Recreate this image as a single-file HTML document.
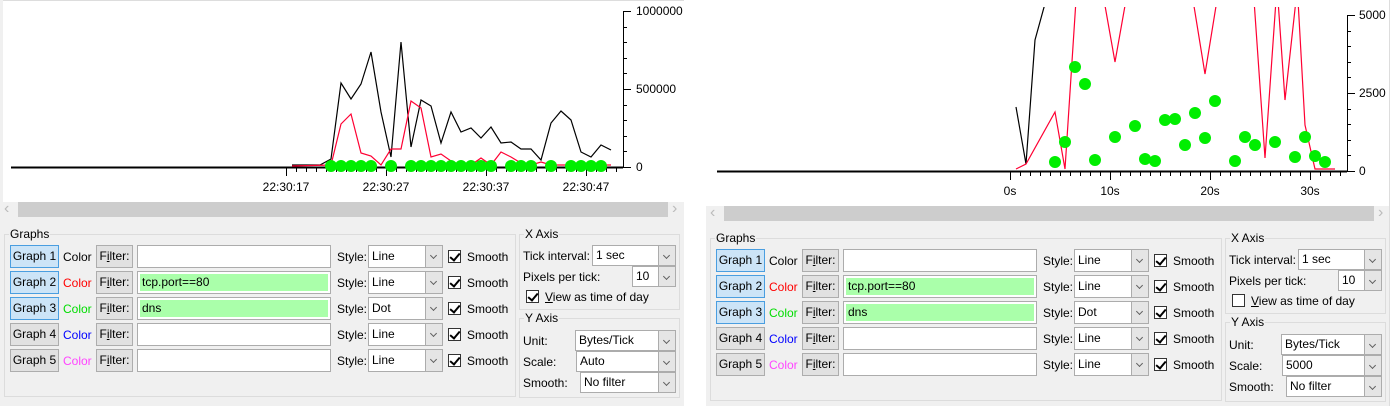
<!DOCTYPE html>
<html><head><meta charset="utf-8">
<style>
*{box-sizing:border-box;margin:0;padding:0}
body{width:1392px;height:406px;background:#fff;position:relative;overflow:hidden;font-family:"Liberation Sans",sans-serif;font-size:12px;color:#000}
.a{position:absolute}
.pane{position:absolute;background:#f0f0f0}
.grp{position:absolute;border:1px solid #dcdcdc;}
.grp>.lg{position:absolute;top:-8px;left:4px;background:#f0f0f0;padding:0 1px;line-height:14px}
.btn{position:absolute;height:23px;border:1px solid #adadad;background:#e1e1e1;line-height:21px;text-align:center}
.btn.sel{background:#cce4f7;border-color:#4a9ee0}
.inp{position:absolute;height:23px;border:1px solid #acacac;background:#fff;line-height:21px;padding-left:4px}
.inp.g{background:#aaffaa;border:3px solid #fff;outline:1px solid #acacac;outline-offset:-1px;line-height:17px;padding-left:2px}
.cb{position:absolute;height:21px;border:1px solid #acacac;background:#fff;line-height:19px;padding-left:3px}
.cb.tall{line-height:21px}
.cb i{position:absolute;right:0;top:0;bottom:0;width:17px;background:#e5e5e5;border-left:1px solid #acacac}
.cb i:after{content:"";position:absolute;left:5px;top:35%;width:4px;height:4px;border-right:1.5px solid #606060;border-bottom:1.5px solid #606060;transform:rotate(45deg)}
.chk{position:absolute;width:13px;height:13px;border:1px solid #333;background:#fff}
.chk.on:after{content:"";position:absolute;left:3px;top:0px;width:4px;height:8px;border-right:2px solid #000;border-bottom:2px solid #000;transform:rotate(40deg)}
.t{position:absolute;line-height:14px;white-space:nowrap}
</style></head><body>
<svg class="a" style="left:0;top:0" width="1392" height="202">
<rect x="0" y="0" width="684" height="1" fill="#ddd"/>
<rect x="0" y="0" width="3" height="202" fill="#f0f0f0"/>
<g id="L"></g><g id="R"></g>
</svg>
<div id="root"></div>
<script>
var ns="http://www.w3.org/2000/svg";
function el(p,t,a,txt){var e=document.createElementNS(ns,t);for(var k in a)e.setAttribute(k,a[k]);if(txt)e.textContent=txt;p.appendChild(e);return e;}
function chart(g,o){
 el(g,"line",{x1:o.x0,y1:o.by+0.5,x2:o.ax,y2:o.by+0.5,stroke:"#000","stroke-width":2});
 el(g,"line",{x1:o.ax+0.5,y1:o.top,x2:o.ax+0.5,y2:o.by+1,stroke:"#000","stroke-width":1});
 for(var i=0;i<=10;i++){var y=o.top+(o.by-o.top)*i/10;el(g,"line",{x1:o.ax,y1:Math.round(y)+0.5,x2:o.ax+(i%5==0?8:4),y2:Math.round(y)+0.5,stroke:"#000"});}
 o.yl.forEach(function(l,i){el(g,"text",{x:o.ax+(o.ylx||13),y:o.top+(o.by-o.top)*i/2+4,"font-size":12,"font-family":"Liberation Sans",fill:"#000"},l);});
 for(var x=o.t0;x<=o.t1;x+=10){var maj=((x-o.t0)%100==0);el(g,"line",{x1:x+0.5,y1:o.by,x2:x+0.5,y2:o.by+(maj?9:5),stroke:"#000"});}
 o.xl.forEach(function(l,i){el(g,"text",{x:o.t0+i*100,y:o.by+24,"text-anchor":"middle","font-size":12,"font-family":"Liberation Sans"},l);});
 var cp=el(g,"clipPath",{id:o.id});el(cp,"rect",{x:0,y:o.clip,width:1392,height:200});
 var gg=el(g,"g",{"clip-path":"url(#"+o.id+")"});
 el(gg,"polyline",{points:o.blk,fill:"none",stroke:"#000","stroke-width":1.2});
 el(gg,"polyline",{points:o.red,fill:"none",stroke:"#ff0033","stroke-width":1.2});
 o.dots.forEach(function(d){el(gg,"circle",{cx:d[0],cy:d[1],r:6,fill:"#00ee00"});});
}
var ld=[331,341,351,361,371,391,411,421,431,441,451,461,471,481,491,511,521,531,551,571,581,591,601].map(function(x){return[x,166]});
chart(document.getElementById("L"),{id:"c1",x0:11,ax:623,top:11,by:167,yl:["1000000","500000","0"],t0:286,t1:616,xl:["22:30:17","22:30:27","22:30:37","22:30:47"],clip:0,
blk:"292,165 320,165 331,159 341,83 351,99 361,84 371,52 381,112 391,157 401,42 411,147 421,100 431,106 441,143 451,112 461,132 471,128 481,138 491,127 501,143 511,142 521,149 531,149 541,160 551,123 561,111 571,120 581,152 591,157 601,145 611,150",
red:"292,166 331,165 341,124 351,114 361,153 371,156 381,165 391,149 401,149 411,101 421,108 431,157 441,154 451,161 461,165 471,165 481,158 491,165 501,152 511,157 521,163 531,165 541,162 551,165 611,165",dots:ld});
var rd=[[1055,162],[1065,142],[1075,67],[1085,84],[1095,160],[1115,137],[1135,126],[1145,159],[1155,161],[1165,120],[1175,119],[1185,145],[1195,113],[1205,138],[1215,101],[1235,161],[1245,137],[1255,145],[1275,142],[1295,157],[1305,137],[1315,156],[1325,162]];
chart(document.getElementById("R"),{id:"c2",x0:717,ax:1347,top:15,by:171,ylx:12,yl:["5000","2500","0"],t0:1010,t1:1340,xl:["0s","10s","20s","30s"],clip:7,
blk:"1016,107 1026,164 1035,40 1046,0",
red:"1016,169 1026,164 1055,112 1065,169 1076,0 1104,0 1115,62 1126,0 1193,0 1205,74 1217,0 1254,0 1265,158 1276,0 1278,0 1285,100 1296,0 1298,0 1305,125 1315,169 1335,169",dots:rd});
var root=document.getElementById("root");
function d(cls,x,y,w,h,html,st){var e=document.createElement("div");e.className=cls;e.style.left=x+"px";e.style.top=y+"px";if(w)e.style.width=w+"px";if(h)e.style.height=h+"px";if(html)e.innerHTML=html;if(st)e.style.cssText+=st;root.appendChild(e);return e;}
function pane(X,Y,W,ox,scale,tod,right){
 d("pane",X,Y+202,W,406-Y-202);
 d("a",X+18,Y+202,W-34,15,"","background:#cdcdcd");
 d("t",X+4,Y+203,10,12,"&#8249;","color:#bbb;font-size:16px;line-height:12px");
 d("t",X+W-12,Y+203,10,12,"&#8250;","color:#bbb;font-size:16px;line-height:12px");
 var g=d("grp",X+4,Y+234,512,163,'<span class="lg">Graphs</span>');
 var cols=["#000","#ff0000","#00dd00","#0000ff","#ff44ff"];
 var flt=["","tcp.port==80","dns","",""];var sty=["Line","Line","Dot","Line","Line"];
 for(var i=0;i<5;i++){var y=Y+245+i*26;
  d("btn"+(i<3?" sel":""),X+10,y,49,0,"Graph "+(i+1));
  d("t",X+63,y+5,0,0,"Color","color:"+cols[i]);
  d("btn",X+96,y,37,0,"F<u>i</u>lter:");
  d("inp"+(flt[i]?" g":""),X+137,y,194,0,flt[i]);
  d("t",X+337,y+5,0,0,"Style:");
  d("cb tall",X+368,y,75,23,sty[i]+"<i></i>");
  d("chk on",X+448,y+5);
  d("t",X+467,y+5,0,0,"Smooth");
 }
 d("grp",X+519,Y+234,161,76,'<span class="lg">X Axis</span>');
 d("t",X+523,Y+249,0,0,"Tick interval:");
 d("cb",X+592,Y+245,84,21,"1 sec<i></i>");
 d("t",X+523,Y+270,0,0,"Pixels per tick:");
 d("cb",X+632,Y+266,44,21,"10<i></i>");
 d("chk"+(tod?" on":""),X+526,Y+290);
 d("t",X+545,Y+290,0,0,"<u>V</u>iew as time of day");
 d("grp",X+519,Y+318,161,80,'<span class="lg">Y Axis</span>');
 d("t",X+523,Y+334,0,0,"Unit:");
 d("cb",X+575,Y+330,101,21,"Bytes/Tick<i></i>");
 d("t",X+523,Y+355,0,0,"Scale:");
 d("cb",X+576,Y+351,100,21,scale+"<i></i>");
 d("t",X+523,Y+376,0,0,"Smooth:");
 d("cb",X+580,Y+372,96,21,"No filter<i></i>");
}
pane(0,0,684,0,"Auto",true);
pane(706,4,684,706,"5000",false);
d("a",1389,0,1,406,"","background:#ddd");
</script>
</body></html>
